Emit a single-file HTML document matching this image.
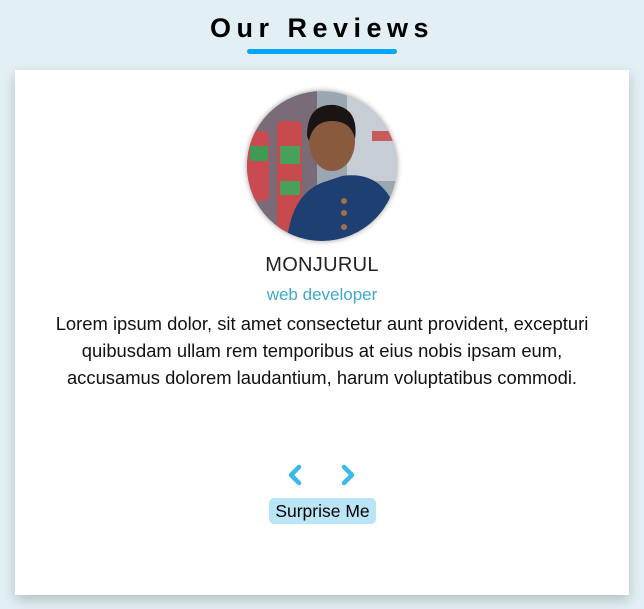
<!DOCTYPE html>
<html><head><meta charset="utf-8"><style>
html,body{margin:0;padding:0;width:644px;height:609px;background:#e2eff4;font-family:"Liberation Sans",Arial,sans-serif;overflow:hidden}
h1{position:absolute;top:13px;left:0;width:644px;text-align:center;margin:0;font-size:27px;font-weight:bold;letter-spacing:5.5px;color:#000}
.ul{position:absolute;left:247px;top:49px;width:150px;height:5px;border-radius:3px;background:#00a6ff}
.card{position:absolute;left:15px;top:70px;width:614px;height:525px;background:#fff;box-shadow:0 5px 12px rgba(0,0,0,.2)}
.av{position:absolute;left:232px;top:21px;width:150px;height:150px;border-radius:50%;overflow:hidden;box-shadow:0 0 6px rgba(0,0,0,.4)}
.name{position:absolute;top:184px;width:100%;text-align:center;font-size:20px;color:#222;letter-spacing:.3px}
.job{position:absolute;top:215px;width:100%;text-align:center;font-size:17px;color:#3ea8d3}
.txt{position:absolute;top:240px;left:27px;width:560px;text-align:center;font-size:18.4px;line-height:27px;color:#111}
.btn{position:absolute;left:254px;top:428px;width:107px;height:26px;border-radius:5px;background:#b9e5f6;font-size:17.5px;line-height:26px;text-align:center;color:#000}
</style></head><body>
<h1>Our Reviews</h1><div class="ul"></div>
<div class="card">
<div class="av"><svg width="150" height="150" viewBox="0 0 150 150">
<rect width="150" height="150" fill="#9aa7b0"/>
<rect x="0" y="0" width="70" height="150" fill="#7a6b78"/>
<rect x="0" y="40" width="22" height="70" rx="6" fill="#c94a50"/>
<rect x="3" y="55" width="18" height="15" fill="#3f9a55"/>
<rect x="30" y="30" width="25" height="110" rx="6" fill="#c74b4d"/>
<rect x="33" y="55" width="20" height="18" fill="#48a05a"/>
<rect x="33" y="90" width="20" height="14" fill="#48a05a"/>
<rect x="100" y="0" width="50" height="90" fill="#c6cdd4"/>
<rect x="125" y="40" width="25" height="10" fill="#c75a5a"/>
<path d="M40 150 Q45 100 80 90 L95 85 Q130 80 145 110 L150 150Z" fill="#1e3f72"/>
<ellipse cx="85" cy="50" rx="23" ry="30" fill="#8a5a3e"/>
<path d="M60 45 Q60 12 88 14 Q112 18 108 48 Q104 30 85 30 Q66 30 62 50Z" fill="#1a1414"/>
<circle cx="97" cy="110" r="3" fill="#a0704a"/><circle cx="97" cy="122" r="3" fill="#a0704a"/><circle cx="97" cy="136" r="3" fill="#a0704a"/>
</svg></div>
<div class="name">MONJURUL</div>
<div class="job">web developer</div>
<div class="txt">Lorem ipsum dolor, sit amet consectetur aunt provident, excepturi quibusdam ullam rem temporibus at eius nobis ipsam eum, accusamus dolorem laudantium, harum voluptatibus commodi.</div>
<svg style="position:absolute;left:270px;top:393px" width="75" height="24" viewBox="0 0 75 24"><path d="M14 4 L6 12 L14 20" fill="none" stroke="#3cb9e8" stroke-width="4.5" stroke-linecap="round" stroke-linejoin="round"/><path d="M59 4 L67 12 L59 20" fill="none" stroke="#3cb9e8" stroke-width="4.5" stroke-linecap="round" stroke-linejoin="round"/></svg>
<div class="btn">Surprise Me</div>
</div>
</body></html>
